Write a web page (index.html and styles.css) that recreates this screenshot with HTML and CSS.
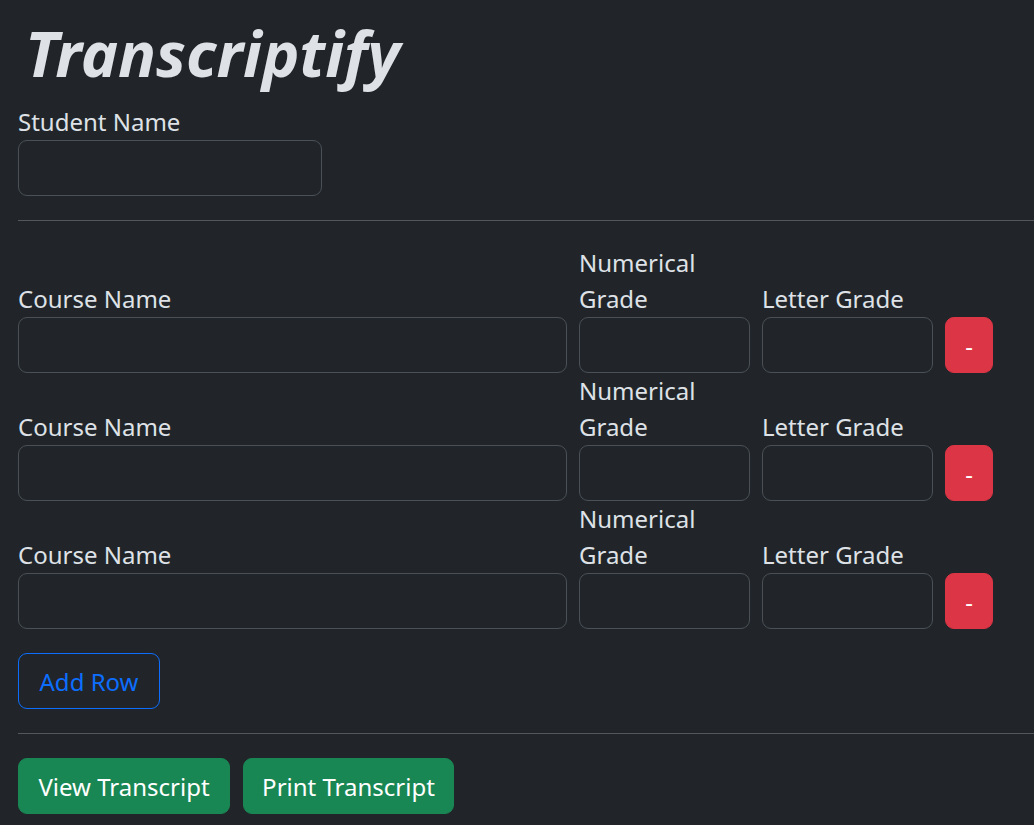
FILE: index.html
```html
<!DOCTYPE html>
<html lang="en">
<head>
  <meta charset="UTF-8" />
  <title>Transcriptify</title>
  <link rel="stylesheet" href="styles.css">
</head>
<body>
  <main class="pagina">
    <h1 class="titulo">Transcriptify</h1>
    <div class="campo-alumno">
      <label class="etiqueta" for="studentName">Student Name</label>
      <input class="entrada" type="text" id="studentName" />
    </div>
    <hr class="separador" />
    <div id="filas">
      <div class="fila">
        <label class="etiqueta">Course Name</label>
        <label class="etiqueta">Numerical Grade</label>
        <label class="etiqueta">Letter Grade</label>
        <span></span>
        <input class="entrada" type="text" />
        <input class="entrada" type="text" />
        <input class="entrada" type="text" />
        <button class="boton boton-rojo">-</button>
      </div>
      <div class="fila">
        <label class="etiqueta">Course Name</label>
        <label class="etiqueta">Numerical Grade</label>
        <label class="etiqueta">Letter Grade</label>
        <span></span>
        <input class="entrada" type="text" />
        <input class="entrada" type="text" />
        <input class="entrada" type="text" />
        <button class="boton boton-rojo">-</button>
      </div>
      <div class="fila">
        <label class="etiqueta">Course Name</label>
        <label class="etiqueta">Numerical Grade</label>
        <label class="etiqueta">Letter Grade</label>
        <span></span>
        <input class="entrada" type="text" />
        <input class="entrada" type="text" />
        <input class="entrada" type="text" />
        <button class="boton boton-rojo">-</button>
      </div>
    </div>
    <button class="boton boton-azul">Add Row</button>
    <hr class="separador" />
    <div class="acciones">
      <button class="boton boton-verde ver">View Transcript</button>
      <button class="boton boton-verde imprimir">Print Transcript</button>
    </div>
  </main>
</body>
</html>
```

FILE: styles.css
```css
* { box-sizing: border-box; }
body {
  margin: 0; padding: 0; background: #212529; color: #dee2e6;
  font-family: 'Noto Sans', 'Open Sans', sans-serif; font-size: 24px; line-height: 36px;
  overflow: hidden;
}
.pagina { padding: 14px 0 0 18px; }
.titulo {
  margin: 0 0 12px 0; font-size: 63px; line-height: 78px; font-weight: 700;
  font-style: italic; color: #dee2e6; padding-left: 7px; letter-spacing: 0;
}
.etiqueta { display: block; }
.campo-alumno { display: flex; flex-direction: column; width: 304px; }
.entrada {
  height: 56px; width: 100%; background: #212529; color: #dee2e6;
  border: 1px solid #495057; border-radius: 9px; font-family: inherit; font-size: 24px;
  padding: 9px 18px; outline: none;
}
.separador {
  border: none; border-top: 1px solid #54585c; margin: 24px 0; height: 0;
}
.fila {
  display: grid; grid-template-columns: 549px 171px 171px 48px;
  column-gap: 12px; align-items: end; width: 975px;
}
.boton {
  height: 56px; border-radius: 9px; font-family: inherit; font-size: 24px;
  padding: 0 18px; border: 1px solid transparent; cursor: pointer; color: #fff;
}
.boton-rojo { background: #dc3545; border-color: #dc3545; padding: 0; width: 48px; }
.boton-azul {
  background: transparent; border-color: #0d6efd; color: #0d6efd;
  margin-top: 24px; width: 142px; padding: 0;
}
.boton-verde { background: #198754; border-color: #198754; padding: 0; }
.ver { width: 212px; }
.imprimir { width: 211px; }
.acciones { display: flex; gap: 13px; }
```
